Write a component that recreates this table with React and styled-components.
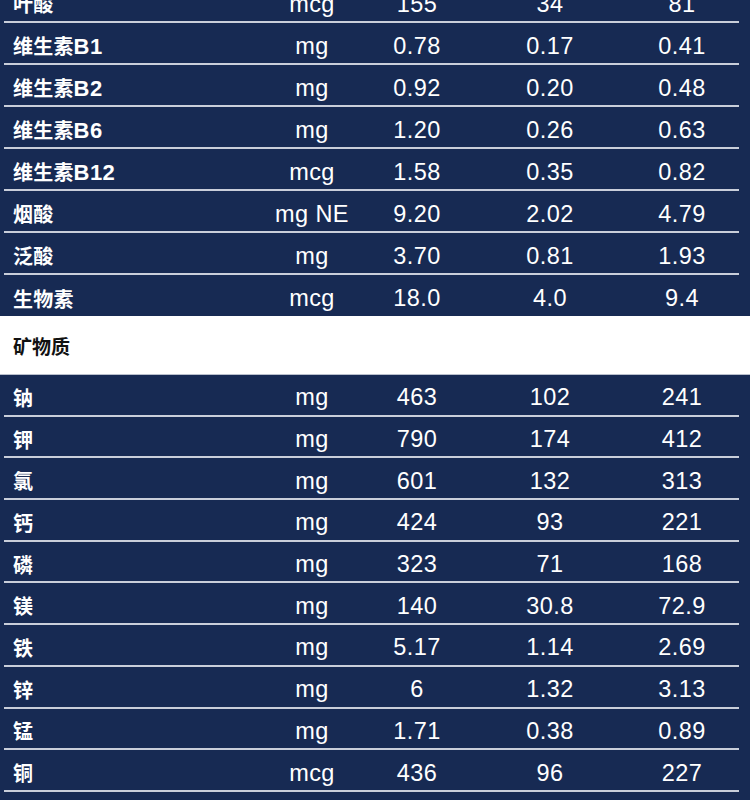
import React from "react";
import styled, { createGlobalStyle } from "styled-components";

const Global = createGlobalStyle`
  html, body { margin: 0; padding: 0; background: #172a53; }
  body { width: 750px; height: 800px; overflow: hidden; }
  #root { width: 750px; }
`;

const Page = styled.div`
  width: 750px;
  margin-top: -19px;
  display: flex;
  flex-direction: column;
  font-family: "Liberation Sans", "Noto Sans CJK SC", Arial, sans-serif;
`;

const Table = styled.div`
  background: #172a53;
  display: flex;
  flex-direction: column;
  padding: 0 11px 0 4px;
`;

const Row = styled.div`
  display: grid;
  grid-template-columns: 258px 100px 110px 156px 108px;
  align-items: center;
  height: ${(p) => p.$h}px;
  box-sizing: border-box;
  border-bottom: ${(p) => (p.$last ? "none" : "2px solid #c9ceda")};
  color: #ffffff;
`;

const Label = styled.div`
  padding-left: 9px;
  padding-top: 5px;
  font-size: 20px;
  font-weight: 700;
  font-family: "Noto Sans CJK SC", sans-serif;
  letter-spacing: 0.2px;
`;

const Latin = styled.span`
  font-family: "Liberation Sans", Arial, sans-serif;
  font-size: 22px;
  font-weight: 700;
  letter-spacing: 0.4px;
`;

const Cell = styled.div`
  text-align: center;
  font-size: 23.5px;
  padding-top: 6px;
  letter-spacing: 0.4px;
  font-family: "Liberation Sans", Arial, sans-serif;
`;

const Section = styled.div`
  background: #ffffff;
  height: 59px;
  box-sizing: border-box;
  display: flex;
  align-items: center;
  padding-left: 13px;
  padding-top: 1px;
  border-bottom: 1px solid #b9bfcc;
  font-family: "Noto Sans CJK SC", sans-serif;
  font-size: 19px;
  font-weight: 700;
  color: #111111;
`;

const vitamins = [
  ["叶酸", "", "mcg", "155", "34", "81"],
  ["维生素", "B1", "mg", "0.78", "0.17", "0.41"],
  ["维生素", "B2", "mg", "0.92", "0.20", "0.48"],
  ["维生素", "B6", "mg", "1.20", "0.26", "0.63"],
  ["维生素", "B12", "mcg", "1.58", "0.35", "0.82"],
  ["烟酸", "", "mg NE", "9.20", "2.02", "4.79"],
  ["泛酸", "", "mg", "3.70", "0.81", "1.93"],
  ["生物素", "", "mcg", "18.0", "4.0", "9.4"],
];

const minerals = [
  ["钠", "", "mg", "463", "102", "241"],
  ["钾", "", "mg", "790", "174", "412"],
  ["氯", "", "mg", "601", "132", "313"],
  ["钙", "", "mg", "424", "93", "221"],
  ["磷", "", "mg", "323", "71", "168"],
  ["镁", "", "mg", "140", "30.8", "72.9"],
  ["铁", "", "mg", "5.17", "1.14", "2.69"],
  ["锌", "", "mg", "6", "1.32", "3.13"],
  ["锰", "", "mg", "1.71", "0.38", "0.89"],
  ["铜", "", "mcg", "436", "96", "227"],
];

function Rows({ data, h, lastNoBorder }) {
  return data.map((r, i) => {
    const last = lastNoBorder && i === data.length - 1;
    return (
      <Row key={r[0] + r[1]} $h={last ? h - 1 : h} $last={last}>
        <Label>
          {r[0]}
          {r[1] && <Latin>{r[1]}</Latin>}
        </Label>
        <Cell>{r[2]}</Cell>
        <Cell>{r[3]}</Cell>
        <Cell>{r[4]}</Cell>
        <Cell>{r[5]}</Cell>
      </Row>
    );
  });
}

export default function App() {
  return (
    <>
      <Global />
      <Page>
        <Table>
          <Rows data={vitamins} h={42} lastNoBorder />
        </Table>
        <Section>矿物质</Section>
        <Table>
          <Rows data={minerals} h={41.7} />
        </Table>
      </Page>
    </>
  );
}
